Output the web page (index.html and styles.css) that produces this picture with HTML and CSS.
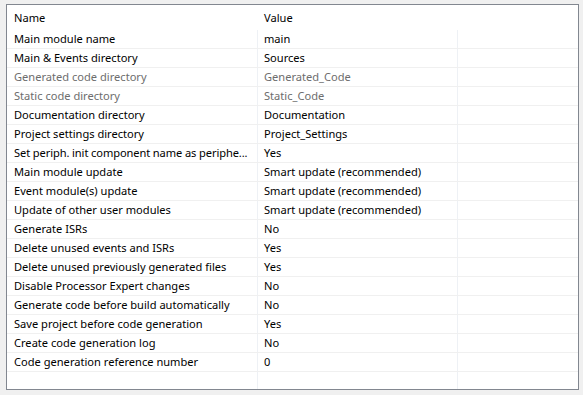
FILE: index.html
```html
<!DOCTYPE html>
<html lang="en">
  <head>
    <meta charset="UTF-8" />
    <title>Build options</title>
    <link rel="stylesheet" href="styles.css">
  </head>
  <body>
    <div class="grid">
      <div class="row header">
        <div class="cell name">Name</div>
        <div class="cell value">Value</div>
        <div class="cell rest"></div>
      </div>
      <div class="row"><div class="cell name">Main module name</div><div class="cell value">main</div><div class="cell rest"></div></div>
      <div class="row"><div class="cell name">Main &amp; Events directory</div><div class="cell value">Sources</div><div class="cell rest"></div></div>
      <div class="row disabled"><div class="cell name">Generated code directory</div><div class="cell value">Generated_Code</div><div class="cell rest"></div></div>
      <div class="row disabled"><div class="cell name">Static code directory</div><div class="cell value">Static_Code</div><div class="cell rest"></div></div>
      <div class="row"><div class="cell name">Documentation directory</div><div class="cell value">Documentation</div><div class="cell rest"></div></div>
      <div class="row"><div class="cell name">Project settings directory</div><div class="cell value">Project_Settings</div><div class="cell rest"></div></div>
      <div class="row"><div class="cell name long" title="Set periph. init component name as peripheral name">Set periph. init component name as periphe...</div><div class="cell value">Yes</div><div class="cell rest"></div></div>
      <div class="row"><div class="cell name">Main module update</div><div class="cell value">Smart update (recommended)</div><div class="cell rest"></div></div>
      <div class="row"><div class="cell name">Event module(s) update</div><div class="cell value">Smart update (recommended)</div><div class="cell rest"></div></div>
      <div class="row"><div class="cell name">Update of other user modules</div><div class="cell value">Smart update (recommended)</div><div class="cell rest"></div></div>
      <div class="row"><div class="cell name">Generate ISRs</div><div class="cell value">No</div><div class="cell rest"></div></div>
      <div class="row"><div class="cell name">Delete unused events and ISRs</div><div class="cell value">Yes</div><div class="cell rest"></div></div>
      <div class="row"><div class="cell name">Delete unused previously generated files</div><div class="cell value">Yes</div><div class="cell rest"></div></div>
      <div class="row"><div class="cell name">Disable Processor Expert changes</div><div class="cell value">No</div><div class="cell rest"></div></div>
      <div class="row"><div class="cell name">Generate code before build automatically</div><div class="cell value">No</div><div class="cell rest"></div></div>
      <div class="row"><div class="cell name">Save project before code generation</div><div class="cell value">Yes</div><div class="cell rest"></div></div>
      <div class="row"><div class="cell name">Create code generation log</div><div class="cell value">No</div><div class="cell rest"></div></div>
      <div class="row"><div class="cell name">Code generation reference number</div><div class="cell value">0</div><div class="cell rest"></div></div>
      <div class="row filler"><div class="cell name"></div><div class="cell value"></div><div class="cell rest"></div></div>
    </div>
  </body>
</html>
```

FILE: styles.css
```css
* {
  margin: 0;
  padding: 0;
  box-sizing: border-box;
}

body {
  background-color: #f0f0f0;
  font-family: 'Noto Sans', 'Open Sans', sans-serif;
  font-size: 11.1px;
  color: #000;
  padding: 4px 0 0 6px;
}

.grid {
  width: 573px;
  height: 386px;
  background-color: white;
  border: 1px solid #828790;
  display: flex;
  flex-direction: column;
}

.row {
  display: flex;
  height: 19px;
  border-bottom: 1px solid #f0f0f0;
}

.row.header {
  height: 25px;
  border-bottom: none;
}

.row.filler {
  flex: 1;
  border-bottom: none;
}

.cell {
  white-space: nowrap;
  overflow: hidden;
  text-overflow: ellipsis;
  line-height: 17px;
  border-right: 1px solid #eef1f5;
}

.header .cell {
  line-height: 25px;
  border-right: none;
  box-shadow: inset -1px 1px 0 white, inset -1px 0 0 #e5e5e5;
}

.name {
  width: 251px;
  padding: 0 4px 0 7px;
}

.name.long {
  padding-right: 0;
  letter-spacing: -0.1px;
}

.value {
  width: 200px;
  padding: 0 6px;
}

.rest {
  flex: 1;
  border-right: none;
}

.header .rest {
  box-shadow: none;
}

.disabled .cell {
  color: #6d6d6d;
}
```
